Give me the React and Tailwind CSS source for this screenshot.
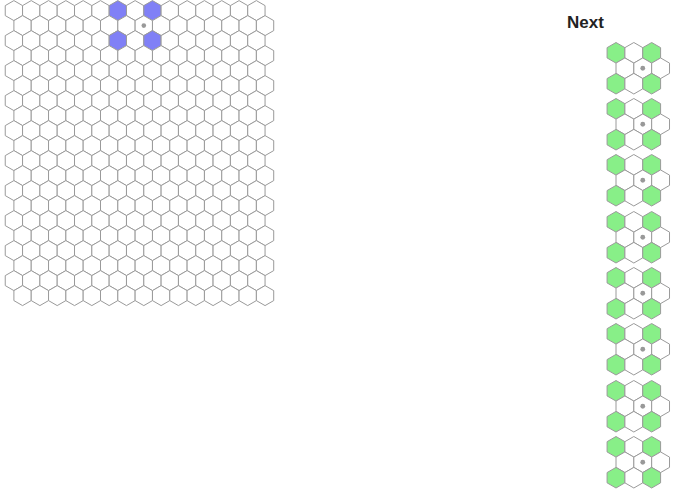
import React from "react";

const S3 = Math.sqrt(3);

function hexPoints(cx, cy, r) {
  const pts = [];
  for (let k = 0; k < 6; k++) {
    const a = ((-90 + 60 * k) * Math.PI) / 180;
    pts.push(`${(cx + r * Math.cos(a)).toFixed(2)},${(cy + r * Math.sin(a)).toFixed(2)}`);
  }
  return pts.join(" ");
}

function Board() {
  const r = 10;
  const w = S3 * r;
  const rows = 20;
  const cols = 15;
  const blue = new Set(["0-6", "0-8", "2-6", "2-8"]);
  const hexes = [];
  for (let row = 0; row < rows; row++) {
    for (let c = 0; c < cols; c++) {
      const cx = 13.9 + w * c + (row % 2 ? w / 2 : 0);
      const cy = 10.6 + 15 * row;
      const key = `${row}-${c}`;
      hexes.push(
        <polygon
          key={key}
          points={hexPoints(cx, cy, r)}
          fill={blue.has(key) ? "#8080f6" : "#ffffff"}
          stroke="#9a9a9a"
          strokeWidth="1"
        />
      );
    }
  }
  const dx = 13.9 + w * 7 + w / 2;
  const dy = 10.6 + 15;
  return (
    <svg width="280" height="310" className="block shrink-0">
      {hexes}
      <circle cx={dx} cy={dy} r="2.3" fill="#999999" />
    </svg>
  );
}

function Preview() {
  const r = 10.3;
  const w = S3 * r;
  const green = new Set(["0-0", "0-2", "2-0", "2-2"]);
  const hexes = [];
  for (let row = 0; row < 3; row++) {
    for (let c = 0; c < 3; c++) {
      const cx = 16 + w * c + (row % 2 ? w / 2 : 0);
      const cy = 10.8 + 15.45 * row;
      const key = `${row}-${c}`;
      hexes.push(
        <polygon
          key={key}
          points={hexPoints(cx, cy, r)}
          fill={green.has(key) ? "#88ef88" : "#ffffff"}
          stroke="#9a9a9a"
          strokeWidth="1"
        />
      );
    }
  }
  return (
    <svg width="72" height="56.4" className="block">
      {hexes}
      <circle cx={16 + w + w / 2} cy={10.8 + 15.45} r="2.4" fill="#999999" />
    </svg>
  );
}

export default function App() {
  return (
    <div
      className="flex w-[679px] h-[497px] overflow-hidden bg-white"
      style={{ fontFamily: '"Liberation Sans", Arial, sans-serif' }}
    >
      <Board />
      <div className="ml-auto w-[112px] flex flex-col">
        <h3 className="mt-[12px] text-[17px] leading-[22px] font-bold text-[#222]">Next</h3>
        <div className="mt-[7.5px] ml-[33px] flex flex-col">
          {Array.from({ length: 8 }).map((_, i) => (
            <Preview key={i} />
          ))}
        </div>
      </div>
    </div>
  );
}
